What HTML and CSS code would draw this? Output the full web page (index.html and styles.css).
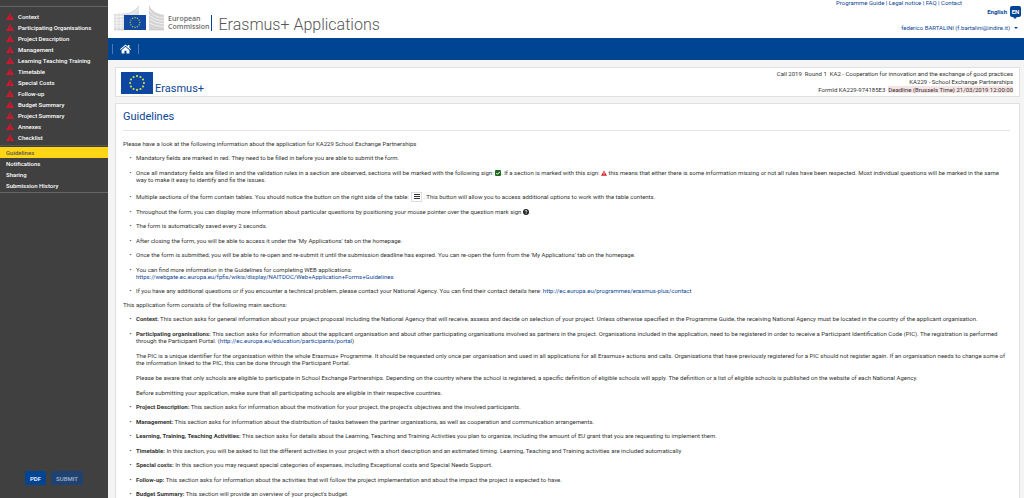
FILE: index.html
```
<!DOCTYPE html>
<html lang="en">
<head>
<meta charset="utf-8">
<title>Erasmus+ Applications</title>
<link rel="stylesheet" href="styles.css">
</head>
<body>
<svg class="defs" aria-hidden="true">
  <symbol id="warn" viewBox="0 0 16 14"><path fill="currentColor" fill-rule="evenodd" d="M8 0 16 14H0ZM7 4.500V9.500H9V4.500ZM7 10.500V12.300H9V10.500Z"/></symbol>
  <symbol id="stars" viewBox="-30 -20 60 40">
    <g fill="currentColor">
      <circle cy="-13" r="2"/><circle cx="6.500" cy="-11.300" r="2"/><circle cx="11.300" cy="-6.500" r="2"/><circle cx="13" r="2"/>
      <circle cx="11.300" cy="6.500" r="2"/><circle cx="6.500" cy="11.300" r="2"/><circle cy="13" r="2"/><circle cx="-6.500" cy="11.300" r="2"/>
      <circle cx="-11.300" cy="6.500" r="2"/><circle cx="-13" r="2"/><circle cx="-11.300" cy="-6.500" r="2"/><circle cx="-6.500" cy="-11.300" r="2"/>
    </g>
  </symbol>
</svg>
<div class="app">
  <aside class="sidebar">
    <nav class="menu">
      <ul class="sections">
        <li><a href="#"><svg class="warn"><use href="#warn"/></svg>Context</a></li>
        <li><a href="#"><svg class="warn"><use href="#warn"/></svg>Participating Organisations</a></li>
        <li><a href="#"><svg class="warn"><use href="#warn"/></svg>Project Description</a></li>
        <li><a href="#"><svg class="warn"><use href="#warn"/></svg>Management</a></li>
        <li><a href="#"><svg class="warn"><use href="#warn"/></svg>Learning Teaching Training</a></li>
        <li><a href="#"><svg class="warn"><use href="#warn"/></svg>Timetable</a></li>
        <li><a href="#"><svg class="warn"><use href="#warn"/></svg>Special Costs</a></li>
        <li><a href="#"><svg class="warn"><use href="#warn"/></svg>Follow-up</a></li>
        <li><a href="#"><svg class="warn"><use href="#warn"/></svg>Budget Summary</a></li>
        <li><a href="#"><svg class="warn"><use href="#warn"/></svg>Project Summary</a></li>
        <li><a href="#"><svg class="warn"><use href="#warn"/></svg>Annexes</a></li>
        <li><a href="#"><svg class="warn"><use href="#warn"/></svg>Checklist</a></li>
      </ul>
      <ul class="pages">
        <li><a class="active" href="#">Guidelines</a></li>
        <li><a href="#">Notifications</a></li>
        <li><a href="#">Sharing</a></li>
        <li><a href="#">Submission History</a></li>
      </ul>
    </nav>
    <div class="actions">
      <button class="btn" type="button">PDF</button>
      <button class="btn" type="button" disabled>SUBMIT</button>
    </div>
  </aside>
  <div class="page">
    <header class="header">
      <div class="brand">
        <svg class="ec-logo" viewBox="0 0 52 26" role="img" aria-label="European Commission">
          <path fill="#dedede" d="M1 9 15 8Q22 6 26 0V11H11V25H1Z"/>
          <path fill="#d4d4d4" d="M36 0Q39 8 51 10V25H36Z"/>
          <path stroke="#fff" stroke-width=".6" fill="none" d="M1 12 14 11Q22 9 26 4M1 15H11M1 18H11M1 21H11M36 5Q40 12 51 13M36 10Q41 15 51 16M36 14Q42 18 51 19M36 18Q42 21 51 22M4 8V25M8 8V25"/>
          <path stroke="#bbb" stroke-width=".5" fill="none" d="M1 25H11M36 25H51"/>
          <rect x="11" y="10" width="22" height="15" fill="#1248a0"/>
          <use href="#stars" x="11" y="10" width="22" height="15" color="#a9c84e"/>
        </svg>
        <div class="ec-name">European<br>Commission</div>
        <h1 class="app-title">Erasmus+ Applications</h1>
      </div>
      <div class="tools">
        <nav class="links"><a href="#">Programme Guide</a> | <a href="#">Legal notice</a> | <a href="#">FAQ</a> | <a href="#">Contact</a></nav>
        <a class="lang" href="#">English <span class="lang-code">EN</span></a>
        <a class="user" href="#">federico BARTALINI (f.bartalini@indire.it)<span class="caret"></span></a>
      </div>
    </header>
    <nav class="navbar">
      <a class="home" href="#" aria-label="Home"><svg viewBox="0 0 24 20"><path fill="#fff" d="M12 0 17 4.500V1H20.500V7.500L24 10.600 22.500 12.300 12 3 1.500 12.300 0 10.600ZM12 5 20.500 12.500V20H14.200V14H9.800V20H3.500V12.500Z"/></svg></a>
    </nav>
    <main class="content">
      <section class="card summary">
        <div class="programme">
          <svg class="flag" viewBox="0 0 32 22" aria-hidden="true"><rect width="32" height="22" fill="#0d47a1"/><use href="#stars" width="32" height="22" color="#d3e04a"/></svg>
          <span>Erasmus+</span>
        </div>
        <div class="form-info">
          <div>Call 2019&nbsp; Round 1&nbsp; KA2 - Cooperation for innovation and the exchange of good practices</div>
          <div>KA229 - School Exchange Partnerships</div>
          <div>FormId KA229-974185E3&nbsp; <mark>Deadline (Brussels Time) 21/03/2019 12:00:00</mark></div>
        </div>
      </section>
      <section class="card guide">
        <h2>Guidelines</h2>
        <p>Please have a look at the following information about the application for KA229 School Exchange Partnerships</p>
        <ul>
          <li>Mandatory fields are marked in red. They need to be filled in before you are able to submit the form.</li>
          <li>Once all mandatory fields are filled in and the validation rules in a section are observed, sections will be marked with the following sign: <svg class="sign ok" viewBox="0 0 12 12"><rect width="12" height="12" rx="2" fill="#1d6b1f"/><path d="M2.500 6 5 8.500 9.800 3.500" fill="none" stroke="#fff" stroke-width="2"/></svg>. If a section is marked with this sign: <svg class="sign bad"><use href="#warn"/></svg> this means that either there is some information missing or not all rules have been respected. Most individual questions will be marked in the same way to make it easy to identify and fix the issues.</li>
          <li class="with-button">Multiple sections of the form contain tables. You should notice the button on the right side of the table: <button class="menu-button" type="button" aria-label="Options"><svg viewBox="0 0 6 6"><path stroke="#333" d="M0 .5H6M0 2.500H6M0 4.500H6"/></svg></button>. This button will allow you to access additional options to work with the table contents.</li>
          <li>Throughout the form, you can display more information about particular questions by positioning your mouse pointer over the question mark sign <svg class="sign" viewBox="0 0 12 12"><circle cx="6" cy="6" r="6" fill="#222"/><path d="M4 4.500Q4 3 6 3T8 4.600Q8 5.400 6 6.400V7.300M6 8.300V9.800" fill="none" stroke="#fff" stroke-width="1.600"/></svg>.</li>
          <li>The form is automatically saved every 2 seconds.</li>
          <li>After closing the form, you will be able to access it under the 'My Applications' tab on the homepage.</li>
          <li>Once the form is submitted, you will be able to re-open and re-submit it until the submission deadline has expired. You can re-open the form from the 'My Applications' tab on the homepage.</li>
          <li>You can find more information in the Guidelines for completing WEB applications:<br><a href="#">https://webgate.ec.europa.eu/fpfis/wikis/display/NAITDOC/Web+Application+Forms+Guidelines</a></li>
          <li>If you have any additional questions or if you encounter a technical problem, please contact your National Agency. You can find their contact details here: <a href="#">http://ec.europa.eu/programmes/erasmus-plus/contact</a></li>
        </ul>
        <p>This application form consists of the following main sections:</p>
        <ul>
          <li><b>Context:</b> This section asks for general information about your project proposal including the National Agency that will receive, assess and decide on selection of your project. Unless otherwise specified in the Programme Guide, the receiving National Agency must be located in the country of the applicant organisation.</li>
          <li><b>Participating organisations:</b> This section asks for information about the applicant organisation and about other participating organisations involved as partners in the project. Organisations included in the application, need to be registered in order to receive a Participant Identification Code (PIC). The registration is performed through the Participant Portal. (<a href="#">http://ec.europa.eu/education/participants/portal</a>)
            <p>The PIC is a unique identifier for the organisation within the whole Erasmus+ Programme. It should be requested only once per organisation and used in all applications for all Erasmus+ actions and calls. Organisations that have previously registered for a PIC should not register again. If an organisation needs to change some of the information linked to the PIC, this can be done through the Participant Portal.</p>
            <p>Please be aware that only schools are eligible to participate in School Exchange Partnerships. Depending on the country where the school is registered, a specific definition of eligible schools will apply. The definition or a list of eligible schools is published on the website of each National Agency.</p>
            <p>Before submitting your application, make sure that all participating schools are eligible in their respective countries.</p></li>
          <li><b>Project Description:</b> This section asks for information about the motivation for your project, the project's objectives and the involved participants.</li>
          <li><b>Management:</b> This section asks for information about the distribution of tasks between the partner organisations, as well as cooperation and communication arrangements.</li>
          <li><b>Learning, Training, Teaching Activities:</b> This section asks for details about the Learning, Teaching and Training Activities you plan to organize, including the amount of EU grant that you are requesting to implement them.</li>
          <li><b>Timetable:</b> In this section, you will be asked to list the different activities in your project with a short description and an estimated timing. Learning, Teaching and Training activities are included automatically</li>
          <li><b>Special costs:</b> In this section you may request special categories of expenses, including Exceptional costs and Special Needs Support.</li>
          <li><b>Follow-up:</b> This section asks for information about the activities that will follow the project implementation and about the impact the project is expected to have.</li>
          <li><b>Budget Summary:</b> This section will provide an overview of your project's budget.</li>
        </ul>
      </section>
    </main>
  </div>
</div>
</body>
</html>
```
FILE: styles.css
```
* { box-sizing: border-box; }
body { margin: 0; font: 6px/7px Roboto, sans-serif; color: #333; background: #f4f4f4; }
a { color: #0b4595; text-decoration: none; }
ul { margin: 0; padding: 0; list-style: none; }
button { font: inherit; cursor: pointer; }
.defs { position: absolute; width: 0; height: 0; }

.app { display: grid; grid-template-columns: 108px 1fr; height: 100vh; overflow: hidden; }

.sidebar { display: flex; flex-direction: column; justify-content: space-between; padding: 6px 0 13px; background: #404040; font-weight: 500; }
.menu { border-top: 1px solid #666; border-bottom: 1px solid #666; }
.sections { padding: 4px 0 2px; border-bottom: 1px solid #555; }
.sections a { display: flex; align-items: center; gap: 4px; height: 11px; padding-left: 6px; color: #fff; }
.warn { width: 8px; height: 7px; color: #d9142c; }
.pages { padding: 1px 0; }
.pages a { display: block; height: 11px; padding-left: 6px; line-height: 11px; color: #fff; }
.pages .active { background: #ffd615; color: #555; }
.actions { display: flex; justify-content: center; gap: 5px; }
.btn { height: 14px; padding: 0 5px; border: 0; border-radius: 1px; background: #004494; color: #fff; }
.btn:disabled { background: #1f4271; color: #a5b3c6; }

.page { display: flex; flex-direction: column; min-width: 0; min-height: 0; }
.header { display: flex; justify-content: space-between; flex: none; height: 38px; background: #fff; }
.brand { display: flex; align-items: flex-end; padding: 0 0 7px 5px; }
.ec-logo { width: 52px; height: 26px; }
.ec-name { margin-left: 3px; padding-right: 1px; border-right: 1px solid #004494; font: 600 7px/8px "Open Sans", sans-serif; color: #6b6b6b; }
.app-title { margin: 0 0 0 7px; font-size: 16px; line-height: 12px; font-weight: 300; color: #555; }
.tools { display: flex; flex-direction: column; align-items: flex-end; padding-right: 3px; }
.links { margin-right: 59px; line-height: 6px; color: #0b4595; }
.lang { display: flex; align-items: center; gap: 3px; font-weight: 700; }
.lang-code { position: relative; width: 11px; height: 11px; border-radius: 2px; background: #004494; color: #fff; line-height: 11px; text-align: center; }
.lang-code::after { content: ""; position: absolute; top: 100%; left: 3px; border: 2px solid transparent; border-top-color: #004494; border-bottom: 0; }
.user { display: flex; align-items: center; gap: 4px; margin: 7px 3px 0 0; }
.caret { border: 2px solid transparent; border-top-color: #0b4595; border-bottom: 0; }

.navbar { display: flex; align-items: center; flex: none; height: 22px; padding-left: 4px; background: #004494; }
.home { display: flex; padding: 0 7px; border-left: 1px solid #4d7cb4; border-right: 1px solid #4d7cb4; }
.home svg { width: 11px; height: 10px; }

.content { display: flex; flex-direction: column; gap: 6px; min-height: 0; padding: 7px 4px 0 7px; }
.card { border: 1px solid #e0e0e0; background: #fff; }
.summary { display: flex; justify-content: space-between; flex: none; padding: 2px 6px 2px 5px; }
.programme { display: flex; align-items: flex-end; gap: 2px; font-size: 11px; line-height: 10px; color: #0b4595; }
.flag { width: 32px; height: 22px; }
.form-info { line-height: 8px; text-align: right; }
mark { background: #f6e3e3; color: inherit; }

.guide { padding: 0 9px 0 7px; }
.guide h2 { margin: 0 0 9px; padding: 6px 0; border-bottom: 1px solid #e4e4e4; font-size: 11px; line-height: 14px; font-weight: 400; color: #0b4595; }
.guide p { margin: 0; }
.guide ul { padding-left: 13px; margin: 7px 0; list-style-type: "•\00a0\00a0\00a0"; }
.guide li + li { margin-top: 7px; }
.guide li:nth-child(even) { margin-top: 8px; }
.guide li p { margin-top: 8px; }
.guide li.with-button { margin-top: 10px; }
.sign { width: 6px; height: 6px; vertical-align: -1px; }
.bad { color: #d61f26; }
.menu-button { display: inline-grid; place-items: center; width: 11px; height: 10px; margin: -2px 1px; padding: 0; border: 1px solid #ddd; background: #fff; vertical-align: middle; }
.menu-button svg { width: 6px; height: 6px; }
```
